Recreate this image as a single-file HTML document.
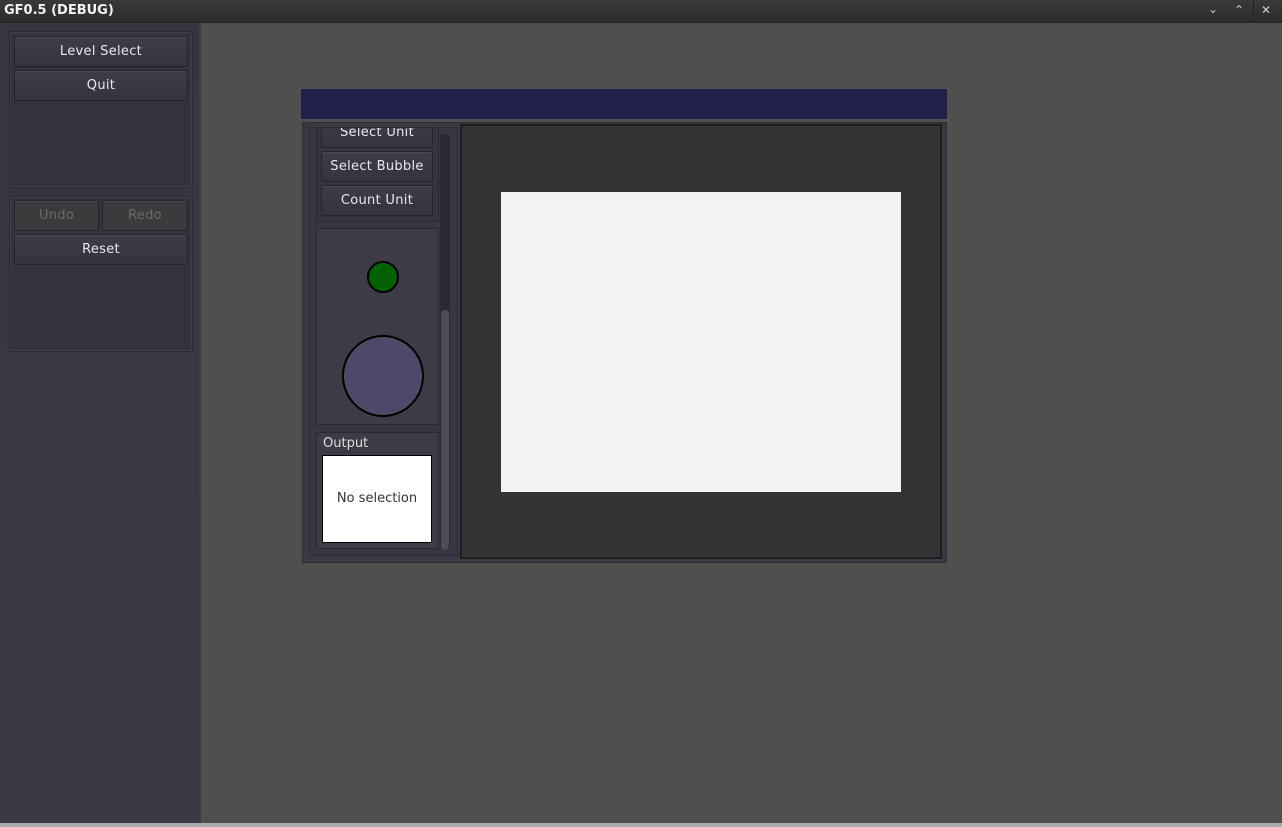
<!DOCTYPE html><html><head><style>
*{margin:0;padding:0;box-sizing:border-box}
body{width:1282px;height:827px;background:#4f4f4f;position:relative;overflow:hidden;font-family:"DejaVu Sans","Liberation Sans",sans-serif}
.a{position:absolute}
.btn{position:absolute;background:linear-gradient(#3e3c48,#35333f);border:1px solid #25242c;border-radius:2px;color:#e8e8ec;font-size:13px;text-align:center;box-shadow:inset 0 1px 0 #4a4855;letter-spacing:0.3px}
.pan{position:absolute;background:#34323c;border:1px solid #2a2931;box-shadow:inset 0 0 0 1px #403e49;border-radius:2px}
</style></head><body>
<div class="a" style="left:0;top:0;width:1282px;height:23px;background:linear-gradient(#3a3a3a,#2b2b2b);border-bottom:1px solid #222"></div>
<div class="a" style="left:4px;top:3px;color:#f2f2f2;font-weight:bold;font-size:13px">GF0.5 (DEBUG)</div>
<div class="a" style="left:1253px;top:0;width:1px;height:22px;background:#222"></div>
<div class="a" style="left:1208px;top:2px;color:#ccc;font-size:12px">&#8964;</div>
<div class="a" style="left:1234px;top:3px;color:#ccc;font-size:12px">&#8963;</div>
<div class="a" style="left:1261px;top:3px;color:#ccc;font-size:12px;font-weight:bold">✕</div>
<div class="a" style="left:0;top:23px;width:201px;height:800px;background:linear-gradient(#37353f,#3b3944);border-right:2px solid #3f3f3f"></div>
<div class="pan" style="left:9px;top:31px;width:184px;height:157px"></div>
<div class="btn" style="left:14px;top:36px;width:174px;height:31px;line-height:30px">Level Select</div>
<div class="btn" style="left:14px;top:70px;width:174px;height:31px;line-height:30px">Quit</div>
<div class="pan" style="left:9px;top:196px;width:184px;height:156px"></div>
<div class="btn" style="left:14px;top:200px;width:85px;height:31px;line-height:30px;color:#6a6a6e;background:#3b3b3d">Undo</div>
<div class="btn" style="left:102px;top:200px;width:86px;height:31px;line-height:30px;color:#6a6a6e;background:#3b3b3d">Redo</div>
<div class="btn" style="left:14px;top:234px;width:174px;height:31px;line-height:30px">Reset</div>
<div class="a" style="left:0;top:823px;width:1282px;height:4px;background:#aaa"></div>

<div class="a" style="left:301px;top:89px;width:646px;height:30px;background:#20204a"></div>
<div class="a" style="left:302px;top:122px;width:645px;height:441px;background:#3a3842;border:1px solid #2e2d34"></div>
<div class="a" style="left:309px;top:127px;width:149px;height:429px;background:#383641;border:1px solid #2d2c33"></div>
<div class="a" style="left:316px;top:127px;width:123px;height:95px;background:#36343e;border:1px solid #2a2931;overflow:hidden">
<div class="btn" style="left:4px;top:-11px;width:112px;height:31px;line-height:30px;font-size:13px">Select Unit</div>
<div class="btn" style="left:4px;top:23px;width:112px;height:31px;line-height:30px;font-size:13px">Select Bubble</div>
<div class="btn" style="left:4px;top:57px;width:112px;height:31px;line-height:30px;font-size:13px">Count Unit</div>
</div>
<div class="a" style="left:440px;top:134px;width:10px;height:416px;background:#2a2930;border-radius:4px"></div>
<div class="a" style="left:441px;top:310px;width:8px;height:240px;background:#4d4b55;border-radius:4px"></div>
<div class="a" style="left:316px;top:228px;width:123px;height:197px;background:#3d3b46;border:1px solid #2a2931"></div>
<div class="a" style="left:367px;top:261px;width:32px;height:32px;border-radius:50%;background:#006200;border:2px solid #000"></div>
<div class="a" style="left:342px;top:335px;width:82px;height:82px;border-radius:50%;background:#4c4a68;border:2px solid #000"></div>
<div class="a" style="left:316px;top:432px;width:123px;height:117px;background:#3d3b46;border:1px solid #2a2931"></div>
<div class="a" style="left:323px;top:436px;color:#ddd;font-size:13px">Output</div>
<div class="a" style="left:322px;top:455px;width:110px;height:88px;background:#fff;border:1px solid #000;color:#333;font-size:13px;text-align:center;line-height:86px">No selection</div>
<div class="a" style="left:460px;top:124px;width:482px;height:435px;background:#333;border:2px solid #1e1e1e"></div>
<div class="a" style="left:501px;top:192px;width:400px;height:300px;background:#f2f2f2"></div>
</body></html>
